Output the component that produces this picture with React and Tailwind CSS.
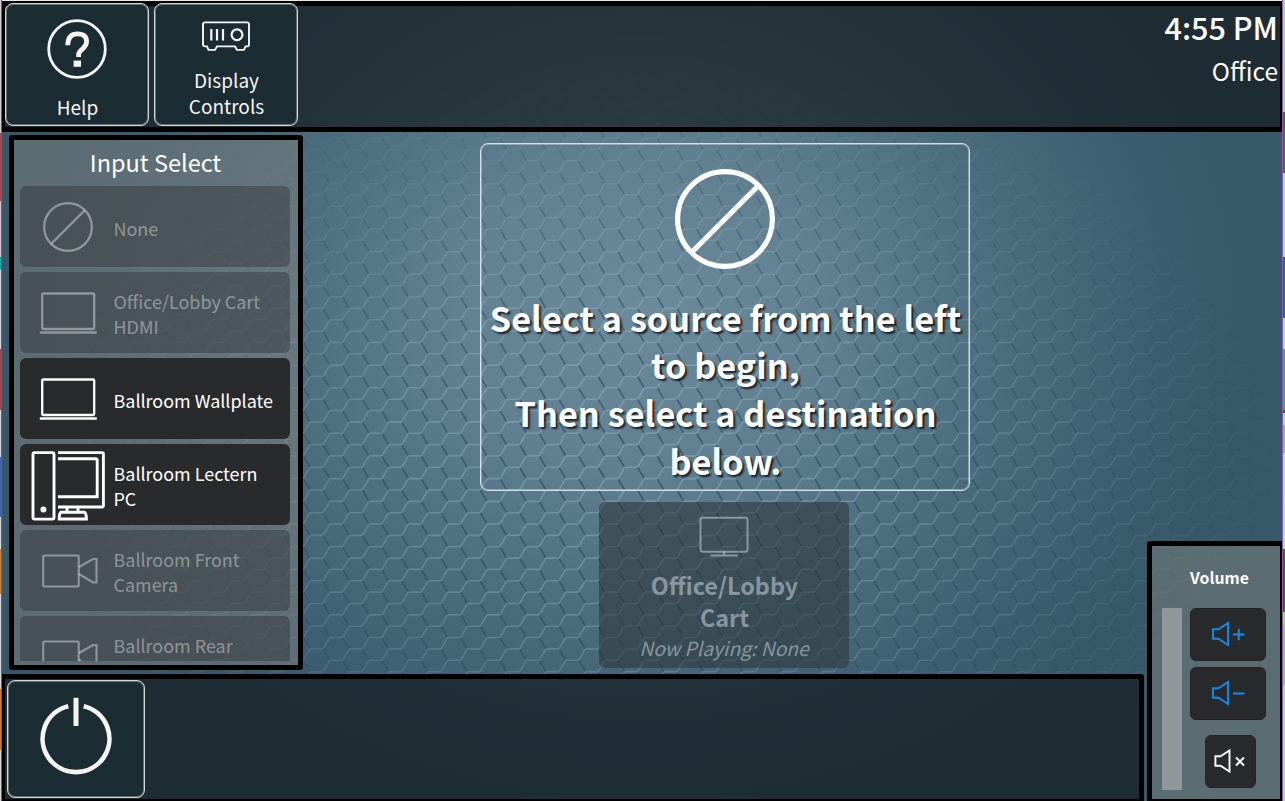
import React from "react";

const FONT = "font-['Noto_Sans_CJK_SC','Noto_Sans',sans-serif]";

const CELL_W = 39.33;
const CELL_H = 22.7;

function honeycomb() {
  let light = "";
  let dark = "";
  for (let c = -8; c < 26; c++) {
    for (let r = -12; r < 20; r++) {
      const x = 316.5 + c * CELL_W;
      const y = 263 + r * CELL_H;
      const h = CELL_H / 2;
      const p = (dx, dy) => (x + dx).toFixed(1) + " " + (y + dy).toFixed(1);
      light += `M${p(-6.5, 0)}L${p(6.5, 0)}L${p(13.2, -h)}L${p(26.1, -h)}L${p(32.8, -2 * h)}`;
      dark += `M${p(6.5, 0)}L${p(13.2, h)}M${p(26.1, h)}L${p(32.8, 2 * h)}`;
    }
  }
  return { light, dark };
}

const HEX = honeycomb();

function Backdrop() {
  return (
    <svg className="absolute inset-0 h-full w-full" viewBox="2 1 1280 800" preserveAspectRatio="none">
      <defs>
        <radialGradient id="glow" gradientUnits="userSpaceOnUse" cx="0" cy="0" r="1" gradientTransform="translate(640 310) scale(610 510)">
          <stop offset="0" stopColor="#6b8a9a" />
          <stop offset="0.3" stopColor="#618192" />
          <stop offset="0.6" stopColor="#4b6d7e" />
          <stop offset="0.85" stopColor="#3c5e70" />
          <stop offset="1" stopColor="#375869" />
        </radialGradient>
        <radialGradient id="fade" gradientUnits="userSpaceOnUse" cx="0" cy="0" r="1" gradientTransform="translate(650 460) scale(640 410)">
          <stop offset="0" stopColor="#fff" />
          <stop offset="0.4" stopColor="#fff" stopOpacity="0.82" />
          <stop offset="0.7" stopColor="#fff" stopOpacity="0.4" />
          <stop offset="1" stopColor="#fff" stopOpacity="0" />
        </radialGradient>
        <mask id="hexMask" maskUnits="userSpaceOnUse" x="0" y="0" width="1285" height="801">
          <rect width="1285" height="674" fill="url(#fade)" />
        </mask>
      </defs>
      <rect width="1285" height="801" fill="url(#glow)" />
      <g mask="url(#hexMask)" fill="none" strokeWidth="1.6">
        <path d={HEX.dark} stroke="#1f4054" strokeOpacity="0.6" />
        <path d={HEX.light} stroke="#9dbccb" strokeOpacity="0.42" />
      </g>
    </svg>
  );
}

function NoneIcon({ className, stroke = 2.3 }) {
  return (
    <svg className={className} viewBox="0 0 50 50" fill="none" stroke="currentColor" strokeWidth={stroke}>
      <circle cx="25" cy="25" r={25 - stroke / 2} />
      <path d="M41.5 8.5L8.5 41.5" />
    </svg>
  );
}

function LaptopIcon() {
  return (
    <svg className="h-[42px] w-[58px]" viewBox="0 0 58 42" fill="none" stroke="currentColor" strokeWidth="2.3">
      <rect x="3.2" y="1.5" width="52" height="35.5" rx="1" />
      <path d="M0.8 40.5H57.8" />
    </svg>
  );
}

function PcIcon() {
  return (
    <svg className="mt-[2px] h-[70px] w-[74px]" viewBox="0 0 74 70" fill="none" stroke="currentColor" strokeWidth="2.9">
      <rect x="2" y="1.6" width="21" height="66.5" rx="1.5" />
      <circle cx="12.4" cy="58.5" r="3" fill="currentColor" stroke="none" />
      <path d="M27 1.6H71Q72.4 1.6 72.4 3V54.6Q72.4 56 71 56H27" />
      <path d="M27 7.8H64.6Q66.2 7.8 66.2 9.4V45.8H27" />
      <path d="M36 56V61M47 56V61M30 61.3H53.5Q55.4 62.5 55.4 68H28.2Q28.2 62.5 30 61.3Z" />
    </svg>
  );
}

function CameraIcon() {
  return (
    <svg className="ml-[4px] h-[34px] w-[56px]" viewBox="0 0 56 34" fill="none" stroke="currentColor" strokeWidth="2.1">
      <rect x="1.2" y="1.5" width="35.5" height="31" rx="1" />
      <path d="M37 13L51 5H54.5V28.5H51L37 20" />
    </svg>
  );
}

function Speaker({ d, x }) {
  return (
    <svg className="h-[26px] w-[36px]" viewBox="0 0 36 26" fill="none" stroke="currentColor" strokeWidth="1.9">
      <path d={x === undefined ? "M2 8.2V17.8H7.5L17 24V2L7.5 8.2Z" : "M3.4 8.2V17.8H8.5L17.5 23.5V2.5L8.5 8.2Z"} />
      <path d={d} strokeWidth="2" />
    </svg>
  );
}

const INPUTS = [
  { label: "None", icon: <NoneIcon className="h-[50px] w-[50px]" />, on: false },
  { label: "Office/Lobby Cart HDMI", icon: <LaptopIcon />, on: false },
  { label: "Ballroom Wallplate", icon: <LaptopIcon />, on: true },
  { label: "Ballroom Lectern PC", icon: <PcIcon />, on: true },
  { label: "Ballroom Front Camera", icon: <CameraIcon />, on: false },
  { label: "Ballroom Rear", icon: <CameraIcon />, on: false, raised: true },
];

function InputRow({ item }) {
  return (
    <button
      className={
        "flex h-[81px] w-[270px] shrink-0 items-center rounded-md text-left text-[17.95px] leading-[25px] " +
        (item.on ? "bg-[#292a2c] text-white" : "bg-[#2a2b2d]/40 text-white/40")
      }
    >
      <span className="flex w-[93.5px] shrink-0 justify-center pl-[3px]">
        <span className="flex shrink-0 justify-center">{item.icon}</span>
      </span>
      <span className={"w-[166px] pt-[3px] " + (item.raised ? "pb-[25px]" : "")}>{item.label}</span>
    </button>
  );
}

const LEFT_EDGE = [
  ["h-[133px]", "bg-[#d3cfd4]"],
  ["h-[68px]", "bg-[#b0454c]"],
  ["h-[56px]", "bg-[#d9c3c8]"],
  ["h-[13px]", "bg-[#16a5ad]"],
  ["h-[79px]", "bg-[#d9d7db]"],
  ["h-[61px]", "bg-[#a83f46]"],
  ["h-[47px]", "bg-[#d9d7db]"],
  ["h-[60px]", "bg-[#3c62b0]"],
  ["h-[32px]", "bg-[#d9d7db]"],
  ["h-[45px]", "bg-[#cf7f2c]"],
  ["h-[95px]", "bg-[#d9d7db]"],
  ["h-[61px]", "bg-[#cf7f2c]"],
  ["h-[51px]", "bg-[#d9d7db]"],
];

const RIGHT_EDGE = [
  ["h-[112px]", "bg-[#c4c1c6]"],
  ["h-[61px]", "bg-[#a53a42]"],
  ["h-[84px]", "bg-[#cfcad0]"],
  ["h-[61px]", "bg-[#2c5bae]"],
  ["h-[31px]", "bg-[#cfcad0]"],
  ["h-[61px]", "bg-[#57988f]"],
  ["h-[3px]", "bg-[#c8141c]"],
  ["h-[12px]", "bg-[#c3cad8]"],
  ["h-[28px]", "bg-[#cd979b]"],
  ["h-[96px]", "bg-[#d5ced4]"],
  ["h-[63px]", "bg-[#b3262c]"],
  ["h-[13px]", "bg-[#d2c650]"],
  ["h-[60px]", "bg-[#cf9ea0]"],
  ["h-[116px]", "bg-[#cbc6cd]"],
];

function Edge({ bands, width }) {
  return (
    <div className={"flex shrink-0 flex-col " + width}>
      {bands.map(([h, c], i) => (
        <div key={i} className={h + " " + c} />
      ))}
    </div>
  );
}

function TopButton({ children }) {
  return (
    <button className="flex h-[123px] w-[144px] flex-col items-center rounded-lg border border-[#d3d8da] bg-[#1c2c33] text-[19px] leading-[26px] text-[#f5f5f5] shadow-[inset_0_0_0_1px_rgba(211,216,218,0.4)]">
      {children}
    </button>
  );
}

export default function App() {
  return (
    <div className={"flex h-[801px] w-[1285px] overflow-hidden " + FONT}>
      <Edge bands={LEFT_EDGE} width="w-px" />
      <div className="w-px shrink-0 bg-[#6b5a93]" />
      <div className="flex h-full w-[1280px] shrink-0 flex-col">
        <div className="h-px shrink-0 bg-[#e6ebe9]" />
        <main className="relative h-[800px]">
          <Backdrop />
          <div className="relative flex h-full flex-col">
            <header className="flex h-[131px] shrink-0 justify-between border-y-[5px] border-r-2 border-l-[3px] border-black bg-[#111517]/65">
              <div className="-mt-[3px] flex gap-[5px]">
                <TopButton>
                  <svg className="mt-[15px] h-[60px] w-[60px]" viewBox="0 0 60 60">
                    <circle cx="30" cy="30" r="28.3" fill="none" stroke="#f5f5f5" strokeWidth="2.8" />
                    <path
                      d="M20.7 26.2Q21 14.8 30.4 14.8Q39.6 14.8 39.6 22.6Q39.6 26.6 35.6 29.8Q31.8 32.8 31.6 35.6V38"
                      fill="none"
                      stroke="#f5f5f5"
                      strokeWidth="4.8"
                    />
                    <rect x="26.6" y="41.6" width="7.4" height="6.2" fill="#f5f5f5" />
                  </svg>
                  <span className="mt-[15px] pl-px">Help</span>
                </TopButton>
                <TopButton>
                  <svg className="mt-[17px] h-[30px] w-[48px]" viewBox="0 0 48 30" fill="none" stroke="#f5f5f5" strokeWidth="1.9">
                    <path d="M3 1.4H45Q47 1.4 47 3.4V23.4Q47 25.4 45 25.4H43.5L42 28.9H35L33 25.4H15L13 28.9H6.5L5 25.4H3Q1 25.4 1 23.4V3.4Q1 1.4 3 1.4Z" />
                    <path d="M9.3 8V19.5M15 8V19.5M21 8V19.5" strokeWidth="2.2" />
                    <circle cx="35" cy="13.7" r="5.4" strokeWidth="2.2" />
                  </svg>
                  <span className="mt-[16px] ml-px w-[90px]">Display Controls</span>
                </TopButton>
              </div>
              <div className="flex flex-col items-end pr-[2px] text-white">
                <div className="text-[30.6px] leading-[42px] font-medium">4:55 PM</div>
                <div className="mt-[7px] text-[24.5px] leading-[32px]">Office</div>
              </div>
            </header>

            <div className="flex h-[669px]">
              <div className="flex w-[1142px] shrink-0 flex-col">
                <div className="flex h-[542px] shrink-0">
                  <aside className="mt-[3px] ml-[7px] flex h-[535px] w-[294px] shrink-0 flex-col items-center rounded-[3px] border-[5px] border-black bg-[#80807e]/50">
                    <h2 className="h-[46px] pt-[6px] pr-px text-[23.5px] leading-[32px] text-white">Input Select</h2>
                    <div className="-ml-[2px] flex h-[475px] flex-col gap-[5px] overflow-hidden">
                      {INPUTS.map((item) => (
                        <InputRow key={item.label} item={item} />
                      ))}
                    </div>
                  </aside>
                  <section className="ml-[177px] flex w-[490px] shrink-0 flex-col items-center pt-[11px]">
                    <div className="flex h-[348px] w-[490px] flex-col items-center rounded-lg border border-[#d5dee2] text-white shadow-[inset_0_0_0_1px_rgba(213,222,226,0.45)]">
                      <NoneIcon className="mt-[25px] h-[100px] w-[100px] shrink-0" stroke={2.6} />
                      <p className="mt-[24.5px] ml-px text-center text-[34.35px] leading-[47.7px] font-bold whitespace-nowrap [text-shadow:2px_2px_2px_rgba(0,0,0,0.75)]">
                        Select a source from the left
                        <br />
                        to begin,
                        <br />
                        Then select a destination
                        <br />
                        below.
                      </p>
                    </div>
                    <div className="mt-[11px] mr-[2px] flex h-[166px] w-[250px] flex-col items-center rounded-md bg-[#2f3438]/56 text-[#d3e0e6]/50">
                      <svg className="mt-[14px] h-[42px] w-[50px]" viewBox="0 0 50 42" fill="none" stroke="currentColor" strokeWidth="2">
                        <rect x="1.5" y="1.7" width="47" height="34" rx="2" />
                        <path d="M25 35.5V39M11.5 39.5H39" />
                      </svg>
                      <div className="mt-[12px] ml-px text-center text-[23.4px] leading-[31.5px] font-bold">
                        Office/Lobby
                        <br />
                        Cart
                      </div>
                      <div className="mt-px text-[19.3px] leading-[28px] italic">Now Playing: None</div>
                    </div>
                  </section>
                </div>
                <footer className="flex h-[127px] shrink-0 rounded-tr-[3px] border-t-[5px] border-r-[5px] border-b-2 border-l-[3px] border-black bg-[#111517]/65">
                  <button className="mt-px ml-[2px] flex h-[118px] w-[138px] items-center justify-center rounded-lg border border-[#d3d8da] bg-[#1c2c33] pb-[6px] shadow-[inset_0_0_0_1px_rgba(211,216,218,0.4)]">
                    <svg className="h-[78px] w-[72px]" viewBox="0 0 72 78" fill="none" stroke="#f5f5f5" strokeWidth="4.6">
                      <path d="M28.3 9.2A33.4 33.4 0 1 0 43.7 9.2" />
                      <path d="M36 0.8V29" strokeWidth="5" />
                    </svg>
                  </button>
                </footer>
              </div>

              <aside className="ml-[3px] flex h-[260px] w-[135px] shrink-0 flex-row gap-2 self-end rounded-tl-[3px] border-t-[5px] border-r-2 border-b-2 border-l-[5px] border-black bg-[#80807e]/50 pl-[10px]">
                <div className="mt-[62px] h-[182px] w-[20px] rounded-[1px] bg-[#8e9799]" />
                <div className="flex w-[76px] flex-col items-center">
                  <div className="mt-[20px] mr-[17px] h-[42px] text-[15.8px] leading-[24px] font-bold text-white">Volume</div>
                  <button className="flex h-[53px] w-[76px] items-center justify-center rounded-md border border-[#232425] bg-[#292a2c] pb-px pl-px text-[#0d8fef]">
                    <Speaker d="M22 13.5H33.5M27.7 7.7V19.2" />
                  </button>
                  <button className="mt-[6px] flex h-[53px] w-[76px] items-center justify-center rounded-md border border-[#232425] bg-[#292a2c] pb-px pl-px text-[#0d8fef]">
                    <Speaker d="M22 13.5H33.5" />
                  </button>
                  <button className="mt-[15px] ml-[4px] flex h-[53px] w-[51px] items-center justify-center rounded-md border border-[#232425] bg-[#292a2c] pb-px text-white">
                    <Speaker x={1} d="M24 9.5L32 17.5M32 9.5L24 17.5" />
                  </button>
                </div>
              </aside>
            </div>
          </div>
        </main>
      </div>
      <div className="w-px shrink-0 bg-[#8a5bb8]" />
      <Edge bands={RIGHT_EDGE} width="w-[2px]" />
    </div>
  );
}
